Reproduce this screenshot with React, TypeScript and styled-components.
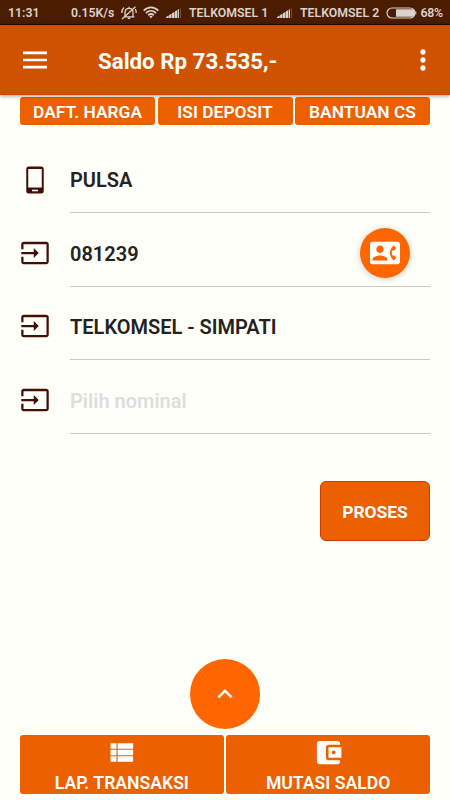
import React from "react";
import styled, { createGlobalStyle } from "styled-components";

const GlobalStyle = createGlobalStyle`
  * { box-sizing: border-box; }
  body {
    margin: 0;
    background: #fffffa;
    font-family: Roboto, "Liberation Sans", sans-serif;
    font-weight: 600;
  }
  button { font: inherit; border: 0; padding: 0; margin: 0; color: inherit; }
  svg { display: block; flex: none; }
`;

const Screen = styled.div`
  width: 450px;
  height: 800px;
  display: flex;
  flex-direction: column;
  overflow: hidden;
  background: #fffffa;
`;

const StatusBar = styled.div`
  height: 25px;
  flex: none;
  display: flex;
  align-items: center;
  padding: 1px 8px 0;
  background: #4a1c00;
  border-bottom: 1px solid #210b00;
  color: #dbd2cc;
  font-size: 12.3px;
  white-space: nowrap;
`;

const StatusText = styled.span<{ $width: number; $gap?: number; $tracking?: number }>`
  width: ${(p) => p.$width}px;
  flex: none;
  margin-right: ${(p) => p.$gap ?? 0}px;
  letter-spacing: ${(p) => p.$tracking ?? 0}px;
`;

const StatusIcon = styled.svg<{ $gap: number }>`
  margin-right: ${(p) => p.$gap}px;
`;

const Header = styled.header`
  position: relative;
  height: 70px;
  flex: none;
  display: flex;
  align-items: center;
  padding: 0 11.5px 0 19px;
  background: #cf5200;
  border-bottom: 1px solid #d94400;
  box-shadow: 0 1px 4px rgba(0, 0, 0, 0.4);
  color: #fff;
`;

const Title = styled.h1`
  flex: 1;
  margin: 3px 0 0 47px;
  font-size: 22.3px;
  line-height: 28px;
  font-weight: 700;
`;

const IconButton = styled.button`
  display: flex;
  background: none;
  color: #fff;
`;

const ButtonRow = styled.div<{ $height: number; $top?: number }>`
  display: flex;
  flex: none;
  gap: 2.5px;
  height: ${(p) => p.$height}px;
  margin: ${(p) => p.$top ?? 0}px 20px 0;
`;

const TabButton = styled.button`
  flex: 1 1 0;
  border-radius: 3px;
  background: #ec6000;
  color: #fff;
  font-size: 17.4px;
  line-height: 28px;
  padding-top: 1px;
  white-space: nowrap;
`;

const Form = styled.main`
  flex: none;
  display: flex;
  flex-direction: column;
  padding: 15px 20px 0;
`;

const Field = styled.div`
  height: 73.4px;
  display: flex;
  align-items: stretch;
  gap: 20px;
  color: #430f05;
`;

const FieldIcon = styled.div`
  display: flex;
  padding-top: 24.5px;
`;

const FieldBody = styled.div<{ $placeholder?: boolean }>`
  flex: 1;
  display: flex;
  align-items: center;
  justify-content: space-between;
  padding: 8.5px 20px 0 0;
  border-bottom: 1px solid #c8c8c6;
  color: ${(p) => (p.$placeholder ? "#deded9" : "#222")};
  font-size: 20px;
`;

const ContactButton = styled.button`
  width: 50px;
  height: 50px;
  margin-top: -2px;
  display: flex;
  align-items: center;
  justify-content: center;
  border-radius: 50%;
  background: #ff6600;
  color: #fff;
  box-shadow: 0 1px 6px rgba(0, 0, 0, 0.22);
`;

const SubmitButton = styled.button`
  align-self: flex-end;
  width: 110px;
  height: 60px;
  margin-top: 47px;
  padding-top: 2px;
  border: 1px solid #d03a00;
  border-radius: 6px;
  background: #ec6000;
  color: #fff;
  font-size: 17.4px;
  font-weight: 700;
`;

const Footer = styled.footer`
  margin-top: auto;
  padding-bottom: 6px;
  display: flex;
  flex-direction: column;
`;

const ExpandButton = styled.button`
  align-self: center;
  width: 70px;
  height: 70px;
  display: flex;
  align-items: center;
  justify-content: center;
  border-radius: 50%;
  background: #ff6600;
  color: #fff;
`;

const ReportButton = styled.button`
  flex: 1 1 0;
  display: flex;
  flex-direction: column;
  align-items: center;
  justify-content: space-between;
  padding-top: 2px;
  border-radius: 3px;
  background: #ec6000;
  color: #fff;
  font-size: 17.600px;
  line-height: 22px;
`;

const paths = {
  menu: "M3 18.3h18v-2H3zm0-5.3h18v-2H3zm0-7.3v2h18v-2z",
  more: "M12 8c1.1 0 2-.9 2-2s-.9-2-2-2-2 .9-2 2 .9 2 2 2zm0 2c-1.1 0-2 .9-2 2s.9 2 2 2 2-.9 2-2-.9-2-2-2zm0 6c-1.1 0-2 .9-2 2s.9 2 2 2 2-.9 2-2-.9-2-2-2z",
  phone:
    "M7 1.2h10a2 2 0 0 1 2 2v17.6a2 2 0 0 1-2 2H7a2 2 0 0 1-2-2V3.2a2 2 0 0 1 2-2zM6.6 3.2v14.8h10.8V3.2zM9.6 19.8v1.2h4.8v-1.2z",
  input:
    "M21 3.01H3c-1.1 0-2 .9-2 2V9h1.8V4.9h18.4v14.2H2.8V15H1v4.01c0 1.1.9 1.98 2 1.98h18c1.1 0 2-.88 2-1.98v-14c0-1.11-.9-2-2-2zM11 16l4-4-4-4v3.1H1v1.8h10z",
  contact:
    "M22 3H2C.9 3 0 3.9 0 5v14c0 1.1.9 2 2 2h20c1.1 0 1.99-.9 1.99-2L24 5c0-1.1-.9-2-2-2zM8 6c1.66 0 3 1.34 3 3s-1.34 3-3 3-3-1.34-3-3 1.34-3 3-3zm6 12H2v-1c0-2 4-3.1 6-3.1s6 1.1 6 3.1v1zm3.85-4h1.64L21 16l-1.99 1.99c-1.31-.98-2.28-2.38-2.73-3.99-.18-.64-.28-1.31-.28-2s.1-1.36.28-2c.45-1.62 1.42-3.01 2.73-3.99L21 8l-1.51 2h-1.64c-.22.63-.35 1.3-.35 2s.13 1.37.35 2z",
  chevron: "M12 8l-6 6 1.41 1.41L12 10.83l4.59 4.58L18 14z",
  list: "M3.5 14.1h4.600v-4.200H3.500zm0 5h4.600v-4.200H3.500zM3.500 9.100h4.600V4.900H3.500zm5.500 5h12v-4.200H9zm0 5h12v-4.200H9zM9 4.900v4.200h12V4.900z",
  wallet:
    "M21 18v1c0 1.1-.9 2-2 2H5c-1.11 0-2-.9-2-2V5c0-1.1.89-2 2-2h14c1.1 0 2 .9 2 2v1h-9c-1.11 0-2 .9-2 2v8c0 1.1.89 2 2 2h9zm-9-2h10V8H12v8zm4-2.5c-.83 0-1.5-.67-1.5-1.5s.67-1.5 1.5-1.5 1.5.67 1.5 1.5-.67 1.5-1.5 1.5z",
};

function Icon({ name, size }: { name: keyof typeof paths; size: number }) {
  return (
    <svg width={size} height={size} viewBox="0 0 24 24" fill="currentColor" fillRule="evenodd">
      <path d={paths[name]} />
    </svg>
  );
}

function Signal({ gap }: { gap: number }) {
  return (
    <StatusIcon $gap={gap} width="16" height="12" viewBox="0 0 16 12" fill="currentColor">
      <path d="M0 11V10L2.7 8.6V11zM3.1 11V8.1L5.5 6.8V11zM6 11V6.3L8.4 5V11zM8.9 11V4.5L11.3 3.1V11zM11.9 11V2.6L13 2V11z" />
      <path d="M14 1.4L15 .5V11H14z" opacity=".28" />
    </StatusIcon>
  );
}

export default function App() {
  return (
    <>
      <GlobalStyle />
      <Screen>
        <StatusBar>
          <StatusText $width={31} $gap={32}>11:31</StatusText>
          <StatusText $width={44} $gap={6}>0.15K/s</StatusText>
          <StatusIcon $gap={6} width="16" height="14" viewBox="0 0 16 14" fill="none" stroke="currentColor" strokeWidth="1.3">
            <path d="M2.6 10.8H13.4M4 10.5V6.5C4 4 5.5 2.3 8 2.3S12 4 12 6.5V10.5M6.8 12.4H9.2M8 .7V2.2M1 13L14.5 .7M.8 7C.8 4.5 1.6 2.7 3 1.5M15.2 7C15.2 5.3 15 4.2 14.3 3.2" />
          </StatusIcon>
          <StatusIcon $gap={7} width="16" height="13" viewBox="0 0 16 13" fill="none" stroke="currentColor" strokeWidth="1.8">
            <path d="M.6 4.6C5 .2 11 .2 15.4 4.6M3 7C6 4.1 10 4.1 13 7M5.2 9.2C7 7.7 9 7.7 10.8 9.2" />
            <path d="M6.3 10.5Q8 9.2 9.7 10.5L8 12.3z" fill="currentColor" stroke="none" />
          </StatusIcon>
          <Signal gap={7} />
          <StatusText $width={81} $gap={7}>TELKOMSEL 1</StatusText>
          <Signal gap={7} />
          <StatusText $width={81} $gap={5}>TELKOMSEL 2</StatusText>
          <StatusIcon $gap={3.5} width="31" height="12" viewBox="0 0 31 12" fill="none" stroke="currentColor">
            <rect x="1" y="1" width="28" height="10" rx="5" strokeWidth="1.2" />
            <path d="M10 2.2H25.2a3.8 3.8 0 0 1 0 7.6H10z" fill="currentColor" stroke="none" />
            <path d="M29.8 4.5V7.5" strokeWidth="1" />
          </StatusIcon>
          <StatusText $width={24} $tracking={-0.3}>68%</StatusText>
        </StatusBar>
        <Header>
          <IconButton aria-label="Menu"><Icon name="menu" size={32} /></IconButton>
          <Title>Saldo Rp 73.535,-</Title>
          <IconButton aria-label="Opsi"><Icon name="more" size={32} /></IconButton>
        </Header>
        <ButtonRow $height={28} $top={2}>
          <TabButton>DAFT. HARGA</TabButton>
          <TabButton>ISI DEPOSIT</TabButton>
          <TabButton>BANTUAN CS</TabButton>
        </ButtonRow>
        <Form>
          <Field>
            <FieldIcon><Icon name="phone" size={30} /></FieldIcon>
            <FieldBody>PULSA</FieldBody>
          </Field>
          <Field>
            <FieldIcon><Icon name="input" size={30} /></FieldIcon>
            <FieldBody>
              081239
              <ContactButton aria-label="Kontak"><Icon name="contact" size={30} /></ContactButton>
            </FieldBody>
          </Field>
          <Field>
            <FieldIcon><Icon name="input" size={30} /></FieldIcon>
            <FieldBody>TELKOMSEL - SIMPATI</FieldBody>
          </Field>
          <Field>
            <FieldIcon><Icon name="input" size={30} /></FieldIcon>
            <FieldBody $placeholder>Pilih nominal</FieldBody>
          </Field>
          <SubmitButton>PROSES</SubmitButton>
        </Form>
        <Footer>
          <ExpandButton aria-label="Buka"><Icon name="chevron" size={30} /></ExpandButton>
          <ButtonRow $height={59} $top={6}>
            <ReportButton><Icon name="list" size={31} />LAP. TRANSAKSI</ReportButton>
            <ReportButton><Icon name="wallet" size={31} />MUTASI SALDO</ReportButton>
          </ButtonRow>
        </Footer>
      </Screen>
    </>
  );
}
